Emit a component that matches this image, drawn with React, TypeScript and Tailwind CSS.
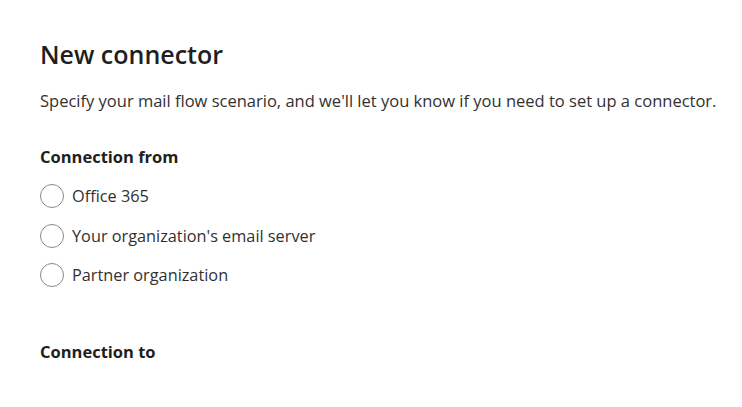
const OPTIONS = ["Office 365", "Your organization's email server", "Partner organization"];

export default function App() {
  return (
    <div
      className="w-[742px] h-[407px] bg-white text-[#323130] pl-[40px] pt-[38px]"
      style={{ fontFamily: "'Open Sans', 'Noto Sans', sans-serif" }}
    >
      <h1 className="text-[25px] leading-[32px] font-semibold text-[#201f1e]">New connector</h1>
      <p className="mt-[19px] text-[16.5px] leading-[24px] text-[#323130] whitespace-nowrap">
        Specify your mail flow scenario, and we'll let you know if you need to set up a connector.
      </p>

      <div className="mt-[32px]">
        <h2 className="text-[16.5px] leading-[24px] font-bold text-[#201f1e]">Connection from</h2>
        <div className="mt-[15px] flex flex-col gap-[15.5px]">
          {OPTIONS.map((o) => (
            <label key={o} className="flex items-center gap-[8px] h-[24px]">
              <span className="w-[24px] h-[24px] rounded-full border border-[#8a8886] shrink-0" />
              <span className="text-[16.3px] leading-[24px] text-[#323130]">{o}</span>
            </label>
          ))}
        </div>
      </div>

      <h2 className="mt-[53px] text-[16.5px] leading-[24px] font-bold text-[#201f1e]">Connection to</h2>
    </div>
  );
}
